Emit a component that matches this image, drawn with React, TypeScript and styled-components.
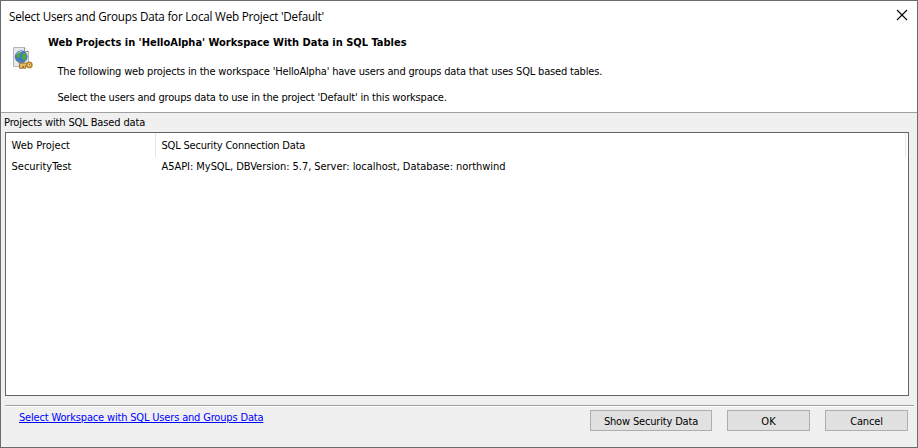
import React from "react";
import styled, { createGlobalStyle } from "styled-components";

const GlobalStyle = createGlobalStyle`
  * { box-sizing: border-box; }
  body { margin: 0; overflow: hidden; background: #f0f0f0; }
`;

const Dialog = styled.div`
  width: 918px;
  height: 448px;
  display: flex;
  flex-direction: column;
  background: #f0f0f0;
  border: 1px solid #6b6b6b;
  color: #000;
  font: 11px/14px "DejaVu Sans Condensed", "DejaVu Sans", sans-serif;
  font-stretch: condensed;
`;

const Text = styled.span<{ $spacing?: number }>`
  display: block;
  white-space: nowrap;
  letter-spacing: ${(p) => p.$spacing ?? 0}px;
`;

const Header = styled.header`
  height: 112px;
  flex: none;
  background: #fff;
  border-bottom: 1px solid #a0a0a0;
`;

const TitleBar = styled.div`
  height: 30px;
  display: flex;
  justify-content: space-between;
  align-items: flex-start;
  padding: 7px 9px 0 8px;
  font: 11.7px/16px "Open Sans", "Noto Sans", sans-serif;
`;

const CloseButton = styled.button`
  width: 12px;
  height: 12px;
  margin-top: 1px;
  padding: 0;
  border: 0;
  background: none;
  svg { display: block; }
`;

const Intro = styled.div`
  display: flex;
  padding: 5px 0 0 11px;
`;

const IconSlot = styled.div`
  width: 36px;
  padding-top: 10px;
  svg { display: block; }
`;

const Heading = styled.h1`
  margin: 0;
  font: bold 11px/14px "DejaVu Sans Condensed", "DejaVu Sans", sans-serif;
  font-stretch: condensed;
`;

const Message = styled.div<{ $gap: number }>`
  margin: ${(p) => p.$gap}px 0 0 9.5px;
`;

const ListLabel = styled.div`
  height: 19px;
  flex: none;
  padding: 3px 0 0 3px;
`;

const ListBox = styled.div`
  width: 904px;
  height: 264px;
  flex: none;
  margin-left: 4px;
  background: #fff;
  border: 1px solid #646464;
`;

const Row = styled.div<{ $header?: boolean }>`
  display: grid;
  grid-template-columns: 150px 750px;
  height: ${(p) => (p.$header ? 24 : 18)}px;
  & > * {
    border-right: 1px solid ${(p) => (p.$header ? "#e5e5e5" : "transparent")};
    padding: ${(p) => (p.$header ? 6 : 3)}px 0 0 5.5px;
  }
`;

const Cell = styled.div``;

const Footer = styled.footer`
  display: flex;
  justify-content: space-between;
  align-items: flex-start;
  flex: none;
  width: 909px;
  height: 42px;
  margin: 9px 0 0 4px;
  padding: 4px 6px 0 14px;
  border-top: 1px solid #a0a0a0;
  box-shadow: inset 0 1px #fff;
`;

const Link = styled.a`
  color: #0000ff;
  margin-top: 1px;
  text-decoration: underline;
  text-decoration-thickness: 1px;
  text-underline-offset: 1px;
`;

const Buttons = styled.div`
  display: flex;
  gap: 15px;
`;

const Button = styled.button<{ $wide?: boolean }>`
  width: ${(p) => (p.$wide ? 122 : 83)}px;
  height: 21px;
  display: flex;
  justify-content: center;
  align-items: center;
  padding: 2px 0 0;
  background: #e1e1e1;
  border: 1px solid #adadad;
  color: #000;
  font: inherit;
`;

const GlobeKeyIcon = () => (
  <svg width="22" height="24" viewBox="0 0 22 24">
    <path d="M1.5 1.5h11l4 4v15h-15z" fill="#e6e8ee" stroke="#b3b6bd" />
    <path d="M12.5 1.5v4h4" fill="#fff" stroke="#8f949c" />
    <circle cx="9.2" cy="10.8" r="6" fill="#4474d4" stroke="#46609e" strokeWidth=".7" />
    <path d="M4.3 8.3l3-2.8 2.7.3-.7 2-1.6 1.2.6 2-2 1.5-1.7-1zM11 7.3l2.2-.7 1.6 3-.7 3.4-2 2.2-1.5-2.4-1-2zM6 13.5l2 .8.7 2-1.8-.7z" fill="#4fa742" />
    <path d="M4.8 7.8q2.2-2.8 5-2.3" fill="none" stroke="#a7cbf6" />
    <path d="M7.5 17.2h8v2.3h-2v2.8h-2v-2h-1v2H7.5z" fill="#e2bd62" stroke="#9a6b20" strokeWidth=".9" />
    <circle cx="17.3" cy="18.9" r="2.5" fill="#f8e5a5" stroke="#b98528" strokeWidth="1.8" />
    <circle cx="17.5" cy="18.7" r=".7" fill="#8a5a14" />
  </svg>
);

export default function App() {
  return (
    <Dialog>
      <GlobalStyle />
      <Header>
        <TitleBar>
          <Text $spacing={-0.23}>Select Users and Groups Data for Local Web Project 'Default'</Text>
          <CloseButton aria-label="Close">
            <svg width="12" height="12" viewBox="0 0 12 12">
              <path d="M1 1l10 10M11 1L1 11" stroke="#000" strokeWidth="1.1" />
            </svg>
          </CloseButton>
        </TitleBar>
        <Intro>
          <IconSlot><GlobeKeyIcon /></IconSlot>
          <div>
            <Heading><Text>Web Projects in 'HelloAlpha' Workspace With Data in SQL Tables</Text></Heading>
            <Message $gap={15}>
              <Text $spacing={-0.18}>The following web projects in the workspace 'HelloAlpha' have users and groups data that uses SQL based tables.</Text>
            </Message>
            <Message $gap={12}>
              <Text $spacing={-0.18}>Select the users and groups data to use in the project 'Default' in this workspace.</Text>
            </Message>
          </div>
        </Intro>
      </Header>
      <ListLabel><Text $spacing={-0.13}>Projects with SQL Based data</Text></ListLabel>
      <ListBox>
        <Row $header>
          <Cell><Text>Web Project</Text></Cell>
          <Cell><Text $spacing={-0.2}>SQL Security Connection Data</Text></Cell>
        </Row>
        <Row>
          <Cell><Text>SecurityTest</Text></Cell>
          <Cell><Text $spacing={-0.05}>A5API: MySQL, DBVersion: 5.7, Server: localhost, Database: northwind</Text></Cell>
        </Row>
      </ListBox>
      <Footer>
        <Link><Text $spacing={-0.17}>Select Workspace with SQL Users and Groups Data</Text></Link>
        <Buttons>
          <Button $wide><Text $spacing={-0.17}>Show Security Data</Text></Button>
          <Button><Text>OK</Text></Button>
          <Button><Text $spacing={-0.17}>Cancel</Text></Button>
        </Buttons>
      </Footer>
    </Dialog>
  );
}
